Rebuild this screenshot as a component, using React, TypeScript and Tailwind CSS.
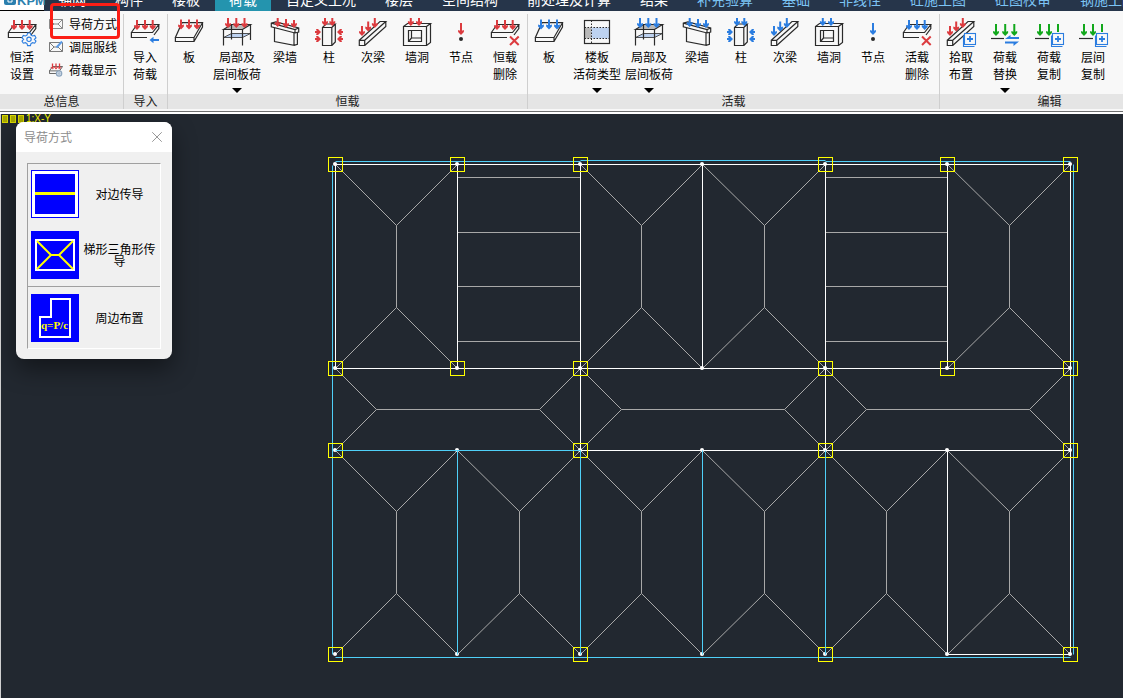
// ============================================
// STRUCTURAL MODELLER - Load ribbon & floor plan
// ============================================

import React, { useState } from 'react';
import { X } from 'lucide-react';

const RED = '#dc3b3f';
const BLUE = '#2b7de0';
const GREEN = '#12a81c';
const INK = '#2b2b2b';

// ============================================
// ICON PARTS
// ============================================

type Direction = 'down' | 'left' | 'right';

interface ArrowProps {
  x: number;
  y: number;
  len?: number;
  color: string;
  dir?: Direction;
}

const ROTATION: Record<Direction, number> = { down: 0, left: 90, right: -90 };

// (x, y) is the tail of the arrow
function Arrow({ x, y, len = 10, color, dir = 'down' }: ArrowProps) {
  return (
    <g transform={`translate(${x} ${y}) rotate(${ROTATION[dir]})`} fill={color} stroke="none">
      <rect x={-1} y={0} width={2} height={len - 3} />
      <path d={`M-2.9 ${len - 5}L0 ${len - 4}L2.9 ${len - 5}V${len - 3}L0 ${len}L-2.9 ${len - 3}Z`} />
    </g>
  );
}

function Icon({ children }: { children: React.ReactNode }) {
  return (
    <svg
      width="32"
      height="32"
      viewBox="0 0 32 32"
      fill="none"
      stroke={INK}
      strokeWidth="1.2"
      className="shrink-0"
      aria-hidden="true"
    >
      {children}
    </svg>
  );
}

function SlabIcon({ color }: { color: string }) {
  return (
    <Icon>
      <path d="M9 6.7H29.5L21 21.5H2.4L9 6.7ZM2.4 21.5V25.5H21V21.5M21 25.5L29.5 11V6.7" />
      <Arrow x={8} y={3.5} color={color} />
      <Arrow x={16} y={3.5} color={color} />
      <Arrow x={24} y={3.5} color={color} />
    </Icon>
  );
}

function FrameIcon({ color }: { color: string }) {
  return (
    <Icon>
      <path d="M2.5 21.5L10.5 17.5H29.5L21.5 21.5Z" fill="#bdd2f0" strokeWidth="0.8" />
      <path d="M2.5 13.5L10.5 8.5H29.5L21.5 13.5Z" fill="#b9b9b9" />
      <path d="M2.5 13.5V29.5M10.5 8.5V23.5M21.5 13.5V29.5M29.5 8.5V24" />
      <Arrow x={7} y={2} color={color} />
      <Arrow x={15.3} y={2} color={color} />
      <Arrow x={23.5} y={2} color={color} />
    </Icon>
  );
}

function BeamWallIcon({ color }: { color: string }) {
  return (
    <Icon>
      <path d="M2.3 7.2L7 5.8L29.7 12V16L26 17L2.3 10.8V7.2ZM2.3 7.2L26 13.6L29.7 12M26 13.6V17" />
      <path d="M5.5 11.8V25.5L25 29.3V17M28.4 16.6V28.3L25 29.3" />
      <Arrow x={8.7} y={2} len={9} color={color} />
      <Arrow x={17} y={3} len={9} color={color} />
      <Arrow x={25} y={4} len={8} color={color} />
    </Icon>
  );
}

function ColumnIcon({ color }: { color: string }) {
  return (
    <Icon>
      <path d="M9.5 11.5H18.8V29.5H9.5ZM9.5 11.5L13 8H22.3L18.8 11.5M22.3 8V26L18.8 29.5" />
      <Arrow x={12} y={2} len={8} color={color} />
      <Arrow x={19.3} y={2} len={8} color={color} />
      <Arrow x={2} y={16} len={6} dir="right" color={color} />
      <Arrow x={2} y={23} len={6} dir="right" color={color} />
      <Arrow x={30} y={16} len={6} dir="left" color={color} />
      <Arrow x={30} y={23} len={6} dir="left" color={color} />
    </Icon>
  );
}

function JoistParts({ color }: { color: string }) {
  return (
    <>
      <path d="M2.3 24.3H7.7V29.5H2.3ZM2.3 24.3L23 5.5H28.8L7.7 24.3M7.7 29.5L28.8 10.5V5.5" />
      <Arrow x={5} y={10} color={color} />
      <Arrow x={11.2} y={5.5} color={color} />
      <Arrow x={17.8} y={2} color={color} />
    </>
  );
}

function JoistIcon({ color }: { color: string }) {
  return (
    <Icon>
      <JoistParts color={color} />
    </Icon>
  );
}

function OpeningIcon({ color }: { color: string }) {
  return (
    <Icon>
      <path d="M2.5 10.5H25.5V29.5H2.5ZM2.5 10.5L6.5 7.5H29.5L25.5 10.5M29.5 7.5V26.5L25.5 29.5" />
      <path d="M7.5 14.5H20.5V25.5H7.5ZM10.5 14.5V22H20.5M10.5 22L7.5 25.5" />
      <Arrow x={9.8} y={2} len={8} color={color} />
      <Arrow x={18} y={2} len={8} color={color} />
    </Icon>
  );
}

function NodeIcon({ color }: { color: string }) {
  return (
    <Icon>
      <Arrow x={16} y={7} len={12} color={color} />
      <circle cx="16" cy="23" r="2" fill={INK} stroke="none" />
    </Icon>
  );
}

function OpenSlabParts({ color }: { color: string }) {
  return (
    <>
      <path d="M2.4 16.5L8 8.5H29.8L23.5 16.5H2.4V21.5H18M29.8 8.5V12.5L25 19" />
      <Arrow x={8} y={4} color={color} />
      <Arrow x={16} y={4} color={color} />
      <Arrow x={23.7} y={4} color={color} />
    </>
  );
}

function DeleteIcon({ color }: { color: string }) {
  return (
    <Icon>
      <OpenSlabParts color={color} />
      <path d="M21 20.5L29.7 29M29.7 20.5L21 29" stroke={RED} strokeWidth="2" />
    </Icon>
  );
}

function GearShape() {
  return (
    <g fill="none" stroke={BLUE} strokeWidth="1.1">
      <path
        d="M21.6 17H24.4L25 19.2L26.6 20L28.7 19.4L30 21.8L28.4 23.3L30 25L28.7 27.2L26.6 26.7L25 27.6L24.4 29.6H21.6L21 27.6L19.4 26.7L17.3 27.2L16 25L17.6 23.3L16 21.8L17.3 19.4L19.4 20L21 19.2Z"
        fill="#f8f8f8"
      />
      <circle cx="23" cy="23.3" r="2.2" />
    </g>
  );
}

function SettingsIcon() {
  return (
    <Icon>
      <OpenSlabParts color={RED} />
      <GearShape />
    </Icon>
  );
}

function ImportIcon() {
  return (
    <Icon>
      <OpenSlabParts color={RED} />
      <path d="M20.5 24L24.5 20.8V23H30V25H24.5V27.2Z" fill={BLUE} stroke="none" />
    </Icon>
  );
}

function FloorTypeIcon() {
  return (
    <Icon>
      <rect x="3.5" y="11.5" width="7" height="11" fill="#b9b9b9" stroke="none" />
      <rect x="10.5" y="11.5" width="18" height="11" fill="#bdd2f0" stroke="none" />
      <rect x="3.5" y="4.5" width="25" height="23" />
      <path d="M3.5 11.5H28.5M3.5 22.5H28.5M10.5 4.5V27.5" strokeWidth="1" strokeDasharray="1.5 1.5" />
    </Icon>
  );
}

function PlusBox() {
  return (
    <g fill="#f8f8f8" stroke={BLUE} strokeWidth="1.1">
      <path d="M18.5 19.5V30.5H29.5" />
      <rect x="19.5" y="17.5" width="11" height="11" />
      <path d="M25 20V26M22 23H28" strokeWidth="1.8" />
    </g>
  );
}

function PickIcon() {
  return (
    <Icon>
      <JoistParts color={RED} />
      <PlusBox />
    </Icon>
  );
}

function ReplaceIcon() {
  return (
    <Icon>
      <Arrow x={7} y={8} len={12} color={GREEN} />
      <Arrow x={16.2} y={8} len={12} color={GREEN} />
      <Arrow x={25.3} y={8} len={12} color={GREEN} />
      <path d="M2 22.5H15" />
      <path d="M16 23L21.5 19V21H30V23ZM30 25.4L24.5 30V27.4H16V25.4Z" fill={BLUE} stroke="none" />
    </Icon>
  );
}

function CopyIcon() {
  return (
    <Icon>
      <Arrow x={7} y={8} len={12} color={GREEN} />
      <Arrow x={16} y={8} len={12} color={GREEN} />
      <path d="M25 8V16" stroke={GREEN} strokeWidth="2" />
      <path d="M2 22.5H16" />
      <PlusBox />
    </Icon>
  );
}

// ============================================
// SMALL ICONS
// ============================================

function HipSmallIcon() {
  return (
    <svg width="14" height="14" viewBox="0 0 14 14" fill="none" stroke="#8a8a8a" aria-hidden="true">
      <path d="M0.5 2.5H13.5V11.5H0.5ZM0.5 2.5L5 7L0.5 11.5M13.5 2.5L9 7L13.5 11.5M5 7H9" />
    </svg>
  );
}

function YieldSmallIcon() {
  return (
    <svg width="14" height="14" viewBox="0 0 14 14" fill="none" stroke="#7a7a7a" aria-hidden="true">
      <path d="M0.5 2.5H13.5V11.5H0.5ZM0.5 2.5L5 7L0.5 11.5M13.5 11.5L9 7M5 7H9" />
      <path d="M13 1.5L7.5 7.5" stroke="#5b9ae6" strokeWidth="2" />
    </svg>
  );
}

function DisplaySmallIcon() {
  return (
    <svg width="14" height="14" viewBox="0 0 32 32" fill="none" stroke="#555" strokeWidth="2" aria-hidden="true">
      <path d="M1 18L8 8H31L24 18H1V24H16" />
      <path d="M8 1V12M16 1V12M24 1V12" stroke={RED} strokeWidth="3" />
      <path d="M4 9L8 14L12 9M12 9L16 14L20 9M20 9L24 14L28 9" stroke={RED} strokeWidth="2" />
      <circle cx="23" cy="24" r="6" fill="#dfe8f2" stroke="#8fa6bf" strokeWidth="3" />
      <circle cx="23" cy="24" r="2" stroke="#8fa6bf" />
    </svg>
  );
}

// ============================================
// RIBBON
// ============================================

interface Tab {
  label: string;
  tone?: 'light';
}

const tabs: Tab[] = [
  { label: '轴网' },
  { label: '构件' },
  { label: '楼板' },
  { label: '荷载' },
  { label: '自定义工况' },
  { label: '楼层' },
  { label: '空间结构' },
  { label: '前处理及计算' },
  { label: '结果' },
  { label: '补充验算', tone: 'light' },
  { label: '基础', tone: 'light' },
  { label: '非线性', tone: 'light' },
  { label: '砼施工图', tone: 'light' },
  { label: '砼图校审', tone: 'light' },
  { label: '钢施工图', tone: 'light' },
];

interface Tool {
  lines: string[];
  icon: React.ReactNode;
  wide?: boolean;
  menu?: boolean;
}

const deadLoadTools: Tool[] = [
  { lines: ['板'], icon: <SlabIcon color={RED} /> },
  { lines: ['局部及', '层间板荷'], icon: <FrameIcon color={RED} />, wide: true, menu: true },
  { lines: ['梁墙'], icon: <BeamWallIcon color={RED} /> },
  { lines: ['柱'], icon: <ColumnIcon color={RED} /> },
  { lines: ['次梁'], icon: <JoistIcon color={RED} /> },
  { lines: ['墙洞'], icon: <OpeningIcon color={RED} /> },
  { lines: ['节点'], icon: <NodeIcon color={RED} /> },
  { lines: ['恒载', '删除'], icon: <DeleteIcon color={RED} /> },
];

const liveLoadTools: Tool[] = [
  { lines: ['板'], icon: <SlabIcon color={BLUE} /> },
  { lines: ['楼板', '活荷类型'], icon: <FloorTypeIcon />, wide: true, menu: true },
  { lines: ['局部及', '层间板荷'], icon: <FrameIcon color={BLUE} />, wide: true, menu: true },
  { lines: ['梁墙'], icon: <BeamWallIcon color={BLUE} /> },
  { lines: ['柱'], icon: <ColumnIcon color={BLUE} /> },
  { lines: ['次梁'], icon: <JoistIcon color={BLUE} /> },
  { lines: ['墙洞'], icon: <OpeningIcon color={BLUE} /> },
  { lines: ['节点'], icon: <NodeIcon color={BLUE} /> },
  { lines: ['活载', '删除'], icon: <DeleteIcon color={BLUE} /> },
];

const editTools: Tool[] = [
  { lines: ['拾取', '布置'], icon: <PickIcon /> },
  { lines: ['荷载', '替换'], icon: <ReplaceIcon />, menu: true },
  { lines: ['荷载', '复制'], icon: <CopyIcon /> },
  { lines: ['层间', '复制'], icon: <CopyIcon /> },
];

const quickTools = [
  { label: '导荷方式', icon: <HipSmallIcon /> },
  { label: '调屈服线', icon: <YieldSmallIcon /> },
  { label: '荷载显示', icon: <DisplaySmallIcon /> },
];

function ToolButton({ lines, icon, wide, menu }: Tool) {
  return (
    <button
      type="button"
      className={`flex shrink-0 flex-col items-center pt-0.5 hover:bg-[#e3eef8] ${wide ? 'w-[52px]' : 'w-11'}`}
    >
      {icon}
      <span className="flex flex-col items-center whitespace-nowrap text-xs leading-[17px]">
        {lines.map(line => (
          <span key={line}>{line}</span>
        ))}
      </span>
      {menu && (
        <svg width="10" height="5" viewBox="0 0 10 5" className="mt-1.5" aria-hidden="true">
          <path d="M0 0H10L5 5Z" fill="#000" />
        </svg>
      )}
    </button>
  );
}

interface GroupProps {
  label: string;
  className?: string;
  first?: boolean;
  children: React.ReactNode;
}

function Group({ label, className = '', first = false, children }: GroupProps) {
  return (
    <section
      aria-label={label}
      className={`flex shrink-0 flex-col ${first ? '' : 'shadow-[inset_1px_0_0_#cfcfcf]'} ${className}`}
    >
      <div className="flex h-20">{children}</div>
      <div className={`h-[15px] bg-[#e5e5e5] text-center text-xs leading-[13px] text-[#222] ${first ? '' : 'ml-px'}`}>
        {label}
      </div>
    </section>
  );
}

function TabBar() {
  const [active, setActive] = useState('荷载');

  return (
    <header className="flex h-[11px] items-end overflow-hidden bg-[#26354a]">
      <div className="flex h-[11px] w-11 shrink-0 items-end gap-px border-b border-black bg-white pl-1 text-[#2b7fae]">
        <svg width="12" height="10" viewBox="0 0 12 10" className="shrink-0" aria-hidden="true">
          <path d="M0 0H12V3Q12 5 10 5H2Q0 5 0 3Z" fill="#2b7fae" />
          <path d="M4 0V2H8V0" fill="none" stroke="#fff" />
        </svg>
        <span className="pb-[3px] font-[Liberation_Sans] text-[13px] font-bold leading-[13px]">KPM</span>
      </div>
      <nav className="flex shrink-0 gap-px">
        {tabs.map(({ label, tone }) => (
          <button
            key={label}
            type="button"
            onClick={() => setActive(label)}
            className={`shrink-0 whitespace-nowrap px-3.5 pb-[5px] text-sm leading-[14px] ${
              active === label ? 'bg-[#2494ae] text-white' : tone === 'light' ? 'text-[#7cc4f4]' : 'text-white'
            }`}
          >
            {label}
          </button>
        ))}
      </nav>
    </header>
  );
}

function Ribbon() {
  return (
    <div className="relative border-b-2 border-white">
      <div className="flex overflow-hidden border-b border-[#707070] bg-[#f8f8f8] pb-0.5 pt-[3px]">
        <Group label="总信息" first className="w-[123px]">
          <ToolButton lines={['恒活', '设置']} icon={<SettingsIcon />} />
          <div className="flex flex-col pl-[5px]">
            {quickTools.map(({ label, icon }) => (
              <button
                key={label}
                type="button"
                className="flex h-[23px] items-center gap-1.5 whitespace-nowrap pb-1 text-xs leading-[17px] hover:bg-[#e3eef8]"
              >
                {icon}
                {label}
              </button>
            ))}
          </div>
        </Group>
        <Group label="导入" className="w-11">
          <ToolButton lines={['导入', '荷载']} icon={<ImportIcon />} />
        </Group>
        <Group label="恒载">
          {deadLoadTools.map((tool, i) => (
            <ToolButton key={i} {...tool} />
          ))}
        </Group>
        <Group label="活载">
          {liveLoadTools.map((tool, i) => (
            <ToolButton key={i} {...tool} />
          ))}
        </Group>
        <Group label="编辑" className="w-[220px]">
          {editTools.map((tool, i) => (
            <ToolButton key={i} {...tool} />
          ))}
        </Group>
      </div>
      {/* Callout around the load transfer command */}
      <div className="pointer-events-none absolute -top-2 left-[50px] h-9 w-[70px] rounded-sm border-[3px] border-[#fb1e16]" />
    </div>
  );
}

// ============================================
// LOAD TRANSFER DIALOG
// ============================================

function OppositeIcon() {
  return (
    <svg width="48" height="48" viewBox="0 0 48 48" className="shrink-0" aria-hidden="true">
      <rect width="48" height="48" fill="#0000ff" />
      <rect x="2.5" y="2.5" width="43" height="43" fill="none" stroke="#fff" strokeWidth="3" />
      <rect x="4" y="22" width="40" height="3" fill="#ffff00" />
    </svg>
  );
}

function TrapezoidIcon() {
  return (
    <svg width="48" height="48" viewBox="0 0 48 48" fill="none" strokeWidth="2" className="shrink-0" aria-hidden="true">
      <rect width="48" height="48" fill="#0000ff" />
      <rect x="5" y="9" width="38" height="30" stroke="#fff" />
      <path d="M6 10L20 24L6 38M42 10L28 24L42 38M20 24H28" stroke="#ffff00" />
    </svg>
  );
}

function PerimeterIcon() {
  return (
    <svg width="48" height="48" viewBox="0 0 48 48" className="shrink-0" aria-hidden="true">
      <rect width="48" height="48" fill="#0000ff" />
      <path d="M20 5H39V43H9V23H20Z" fill="none" stroke="#fff" strokeWidth="2" />
      <text x="10" y="35" fill="#ffff00" className="font-[Liberation_Serif] text-[11px] font-bold">
        q=P/c
      </text>
    </svg>
  );
}

function TransferDialog() {
  const rowClass = 'flex w-full items-center gap-1 pl-[3px] pr-1 text-xs leading-3 text-black';

  return (
    <div
      role="dialog"
      aria-label="导荷方式"
      className="absolute left-[15px] top-2 w-[156px] overflow-hidden rounded-lg bg-[#f0f0f0] shadow-[0_10px_24px_rgba(0,0,0,0.45)]"
    >
      <div className="flex h-[30px] items-center justify-between bg-white pl-2 pr-1.5 text-xs text-[#8c8c8c]">
        <span>导荷方式</span>
        <button type="button" aria-label="关闭">
          <X size={18} strokeWidth={1.2} />
        </button>
      </div>
      <div className="mx-[11px] mb-2.5 mt-[11px] border border-b-white border-l-[#a0a0a0] border-r-white border-t-[#a0a0a0]">
        <button type="button" className={`${rowClass} h-[60px]`}>
          <OppositeIcon />
          <span className="flex-1 text-center">对边传导</span>
        </button>
        <button type="button" className={`${rowClass} h-[63px] border-b border-[#a0a0a0]`}>
          <TrapezoidIcon />
          <span className="flex-1 text-center">梯形三角形传导</span>
        </button>
        <button type="button" className={`${rowClass} h-[61px]`}>
          <PerimeterIcon />
          <span className="flex-1 text-center">周边布置</span>
        </button>
      </div>
    </div>
  );
}

// ============================================
// FLOOR PLAN
// ============================================

const COLS = [335, 457, 580, 702, 825, 947, 1070];
const ROWS = [164, 368, 450, 654];

// Hip shaped load areas, drawn along the long side of each bay
function hipPath(x0: number, y0: number, x1: number, y1: number) {
  const w = x1 - x0;
  const h = y1 - y0;
  if (h > w) {
    const mx = Math.round((x0 + x1) / 2);
    const d = Math.floor(w / 2);
    return `M${x0} ${y0}L${mx} ${y0 + d}L${x1} ${y0}M${mx} ${y0 + d}V${y1 - d}M${x0} ${y1}L${mx} ${y1 - d}L${x1} ${y1}`;
  }
  const my = Math.round((y0 + y1) / 2);
  const d = Math.floor(h / 2);
  return `M${x0} ${y0}L${x0 + d} ${my}L${x0} ${y1}M${x0 + d} ${my}H${x1 - d}M${x1} ${y0}L${x1 - d} ${my}L${x1} ${y1}`;
}

const hips = [
  ...[0, 2, 3, 5].map(c => hipPath(COLS[c], ROWS[0], COLS[c + 1], ROWS[1])),
  ...[0, 2, 4].map(c => hipPath(COLS[c], ROWS[1], COLS[c + 2], ROWS[2])),
  ...[0, 1, 2, 3, 4, 5].map(c => hipPath(COLS[c], ROWS[2], COLS[c + 1], ROWS[3])),
];

const stripes = [177, 232, 286, 341].map(y => `M457 ${y}H580M825 ${y}H947`);

function hasColumn(col: number, row: number) {
  return row < 2 ? col !== 3 : col % 2 === 0;
}

function FloorPlan() {
  return (
    <svg
      width="760"
      height="510"
      viewBox="325 154 760 510"
      fill="none"
      className="ml-[324px] mt-10 shrink-0"
      role="img"
      aria-label="楼层平面"
    >
      <g transform="translate(0.5 0.5)">
        <path d={[...hips, ...stripes].join('')} stroke="#a8a8a8" />
        <path d="M332 165V654M335 161H580M580 160H825M825 161H1070M1073 164V654M335 657H1070" stroke="#4fd0f8" />
        <path d="M335 164H1070M335 368H1070M580 450H1070M947 654H1070" stroke="#fff" />
        <path
          d="M335 164V368M457 164V368M580 164V450M702 164V368M825 164V450M947 164V368M947 450V654M1070 164V654"
          stroke="#fff"
        />
        {ROWS.map((y, row) =>
          COLS.map((x, col) => (
            <g key={`${x}-${y}`}>
              <circle cx={x - 0.5} cy={y - 0.5} r={2} fill="#fff" />
              {hasColumn(col, row) && <rect x={x - 7} y={y - 7} width={14} height={14} stroke="#ffff00" />}
            </g>
          ))
        )}
        <path d="M335 450H580M457 450V654M580 450V654M702 450V654M825 450V654" stroke="#4fd0f8" />
      </g>
    </svg>
  );
}

// ============================================
// PAGE
// ============================================

export default function App() {
  return (
    <div className="flex min-h-screen flex-col overflow-hidden bg-[#222830] font-['Noto_Sans_CJK_SC',sans-serif] text-black">
      <TabBar />
      <Ribbon />
      <main className="relative flex flex-1 overflow-hidden border-l border-[#d0d0d0]">
        <div className="absolute left-px top-0 flex items-center gap-0.5 text-[#ffff00]">
          <i className="h-2 w-1.5 border border-[#d8d800] bg-[#a8a800]" />
          <i className="h-2 w-1.5 border border-[#d8d800] bg-[#a8a800]" />
          <i className="h-2 w-1.5 border border-[#d8d800] bg-[#a8a800]" />
          <span className="font-[Liberation_Sans] text-[10px] leading-[9px]">1:X-Y</span>
        </div>
        <FloorPlan />
        <TransferDialog />
      </main>
    </div>
  );
}
